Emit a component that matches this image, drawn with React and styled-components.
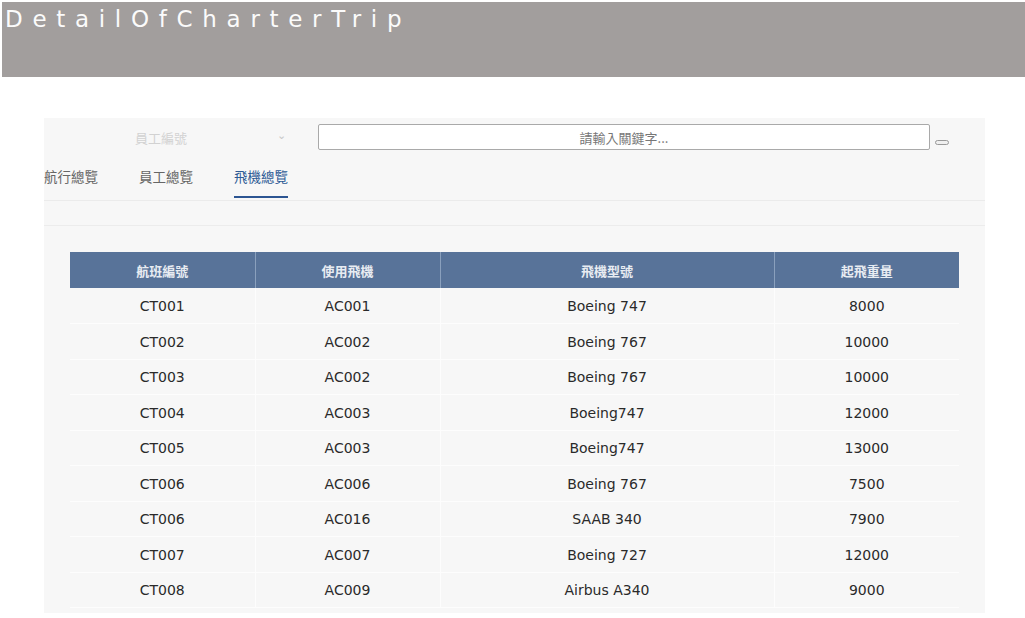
import React from 'react';
import styled, { createGlobalStyle } from 'styled-components';

const rows = [
  ['CT001', 'AC001', 'Boeing 747', '8000'],
  ['CT002', 'AC002', 'Boeing 767', '10000'],
  ['CT003', 'AC002', 'Boeing 767', '10000'],
  ['CT004', 'AC003', 'Boeing747', '12000'],
  ['CT005', 'AC003', 'Boeing747', '13000'],
  ['CT006', 'AC006', 'Boeing 767', '7500'],
  ['CT006', 'AC016', 'SAAB 340', '7900'],
  ['CT007', 'AC007', 'Boeing 727', '12000'],
  ['CT008', 'AC009', 'Airbus A340', '9000'],
];

const tabs = ['航行總覽', '員工總覽', '飛機總覽'];

const App = () => {
  return (
    <>
      <GlobalStyle />
      <Header>
        <Title>DetailOfCharterTrip</Title>
      </Header>
      <Panel>
        <Toolbar>
          <Select>
            <SelectText>員工編號</SelectText>
            <Chevron>⌄</Chevron>
          </Select>
          <SearchInput placeholder="請輸入關鍵字..." />
          <MiniButton />
        </Toolbar>
        <TabBar>
          {tabs.map((t, i) => (
            <Tab key={t} $active={i === 2}>
              {t}
            </Tab>
          ))}
        </TabBar>
        <Content>
          <Table>
            <colgroup>
              <col style={{ width: 185 }} />
              <col style={{ width: 185 }} />
              <col style={{ width: 334 }} />
              <col style={{ width: 185 }} />
            </colgroup>
            <thead>
              <tr>
                <Th>航班編號</Th>
                <Th>使用飛機</Th>
                <Th>飛機型號</Th>
                <Th>起飛重量</Th>
              </tr>
            </thead>
            <tbody>
              {rows.map((r, i) => (
                <tr key={i}>
                  {r.map((c, j) => (
                    <Td key={j}>{c}</Td>
                  ))}
                </tr>
              ))}
            </tbody>
          </Table>
        </Content>
      </Panel>
    </>
  );
};

const GlobalStyle = createGlobalStyle`
  html, body {
    margin: 0;
    padding: 0;
    background: #fff;
    overflow: hidden;
    height: 618px;
    font-family: "DejaVu Sans", "Noto Sans CJK TC", sans-serif;
  }
`;

const Header = styled.header`
  margin: 2px 0 0 2px;
  height: 75px;
  background-color: #a29e9d;
  box-sizing: border-box;
`;

const Title = styled.h1`
  margin: 0;
  padding: 3px 0 0 3px;
  font-size: 23px;
  font-weight: normal;
  line-height: 28px;
  letter-spacing: 9.7px;
  color: #fbfbfb;
  font-family: "DejaVu Sans", sans-serif;
`;

const Panel = styled.section`
  margin: 41px 0 0 44px;
  width: 941px;
  height: 495px;
  overflow: hidden;
  background-color: #f7f7f7;
`;

const Toolbar = styled.div`
  display: flex;
  align-items: center;
  height: 38px;
`;

const Select = styled.div`
  display: flex;
  align-items: center;
  width: 242px;
  padding-left: 91px;
  box-sizing: border-box;
  font-family: "Noto Sans CJK TC", sans-serif;
  font-size: 13px;
  color: #d2d2d2;
`;

const SelectText = styled.span`
  flex: 1;
`;

const Chevron = styled.span`
  font-size: 11px;
  color: #c8c8c8;
  margin-top: -6px;
`;

const SearchInput = styled.input`
  margin-left: 32px;
  width: 612px;
  height: 26px;
  box-sizing: border-box;
  border: 1px solid #a9a9a9;
  border-radius: 2px;
  background: #fff;
  text-align: center;
  font-family: "Noto Sans CJK TC", sans-serif;
  font-size: 13px;
  &::placeholder {
    color: #777;
  }
`;

const MiniButton = styled.button`
  margin: 10px 0 0 5px;
  width: 14px;
  height: 5px;
  padding: 0;
  border: 1px solid #999;
  border-radius: 3px;
  background: #efefef;
`;

const TabBar = styled.div`
  display: flex;
  gap: 41px;
  height: 44px;
  border-bottom: 1px solid #ebebeb;
`;

const Tab = styled.div`
  display: flex;
  align-items: center;
  height: 42px;
  box-sizing: border-box;
  font-family: "Noto Sans CJK TC", sans-serif;
  font-size: 13.5px;
  color: ${({ $active }) => ($active ? '#2d5a95' : '#666')};
  border-bottom: 2px solid ${({ $active }) => ($active ? '#2c5592' : 'transparent')};
`;

const Content = styled.div`
  margin-top: 24px;
  border-top: 1px solid #ececec;
  padding: 26px 26px 0 26px;
`;

const Table = styled.table`
  width: 889px;
  border-collapse: collapse;
  table-layout: fixed;
`;

const Th = styled.th`
  height: 36px;
  padding: 0;
  background-color: #587399;
  color: #e8ecf2;
  font-family: "Noto Sans CJK TC", sans-serif;
  font-size: 13px;
  font-weight: bold;
  border-left: 1px solid #8aa0bd;
  &:first-child {
    border-left: none;
  }
`;

const Td = styled.td`
  height: 35.5px;
  box-sizing: border-box;
  padding: 1px 0 0;
  text-align: center;
  font-size: 14px;
  color: #2a2a2a;
  background-color: #f7f7f7;
  border-bottom: 1px solid #fdfdfd;
  border-left: 1px solid #fdfdfd;
  &:first-child {
    border-left: none;
  }
`;

export default App;
